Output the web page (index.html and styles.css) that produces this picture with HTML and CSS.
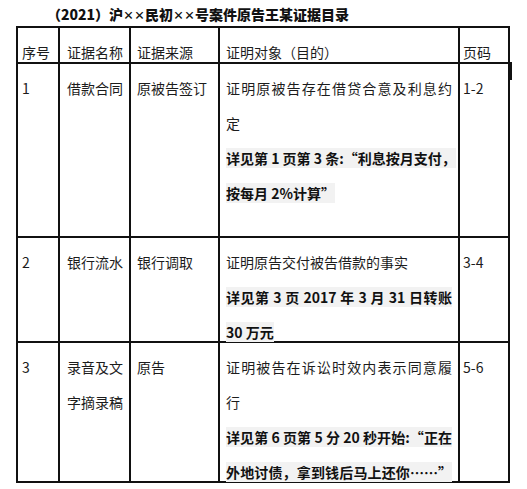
FILE: index.html
```html
<!DOCTYPE html>
<html lang="zh-CN">
<head>
<meta charset="utf-8">
<title>证据目录</title>
<link rel="stylesheet" href="styles.css">
</head>
<body>
<div class="title">（2021）沪<span class="x">××</span>民初<span class="x">××</span>号案件原告王某证据目录</div>
<div class="table">
  <div class="cell c1">序号</div>
  <div class="cell c2">证据名称</div>
  <div class="cell c3">证据来源</div>
  <div class="cell c4">证明对象（目的）</div>
  <div class="cell c5">页码</div>

  <div class="cell c1">1</div>
  <div class="cell c2">借款合同</div>
  <div class="cell c3">原被告签订</div>
  <div class="cell c4">
    <div class="ln fill">证明原被告存在借贷合意及利息约</div>
    <div class="ln">定</div>
    <div class="ln b fill"><span class="hl">详见第 1 页第 3 条:“利息按月支付，</span></div>
    <div class="ln b"><span class="hl">按每月 2%计算”</span></div>
  </div>
  <div class="cell c5 mark">1-2</div>

  <div class="cell c1">2</div>
  <div class="cell c2">银行流水</div>
  <div class="cell c3">银行调取</div>
  <div class="cell c4">
    <div class="ln">证明原告交付被告借款的事实</div>
    <div class="ln b fill"><span class="hl">详见第 3 页 2017 年 3 月 31 日转账</span></div>
    <div class="ln b"><span class="hl">30 万元</span></div>
  </div>
  <div class="cell c5">3-4</div>

  <div class="cell c1">3</div>
  <div class="cell c2">录音及文字摘录稿</div>
  <div class="cell c3">原告</div>
  <div class="cell c4">
    <div class="ln fill">证明被告在诉讼时效内表示同意履</div>
    <div class="ln">行</div>
    <div class="ln b fill"><span class="hl">详见第 6 页第 5 分 20 秒开始:“正在</span></div>
    <div class="ln b fill"><span class="hl">外地讨债，拿到钱后马上还你……”</span></div>
  </div>
  <div class="cell c5">5-6</div>
</div>
</body>
</html>
```

FILE: styles.css
```css
* {
  box-sizing: border-box;
}

html, body {
  margin: 0;
  padding: 0;
  background: #ffffff;
}

body {
  width: 527px;
  height: 489px;
  overflow: hidden;
  font-family: "Noto Sans CJK SC", "Noto Sans", sans-serif;
  color: #1c1c1c;
}

.title {
  height: 26px;
  padding-left: 47px;
  font-size: 14px;
  font-weight: 900;
  line-height: 28px;
  color: #111;
  white-space: nowrap;
}

.x {
  font-size: 11px;
}

.table {
  margin-left: 16px;
  width: 494px;
  display: grid;
  grid-template-columns: 42px 71px 89px 240px 50px;
  grid-template-rows: 36px 174px 105px 140px;
  border-left: 2px solid #111;
  border-top: 2px solid #111;
}

.cell {
  border-right: 2px solid #111;
  border-bottom: 2px solid #111;
  padding-top: 7px;
  font-size: 14px;
  line-height: 35px;
  min-width: 0;
}

.c1 { padding-left: 4px; }
.c2 { padding-left: 7px; padding-right: 2px; }
.c3 { padding-left: 6px; }
.c4 { padding-left: 6px; padding-right: 6px; }
.c5 { padding-left: 3px; }

.ln {
  white-space: nowrap;
}

.fill {
  text-align: justify;
  text-align-last: justify;
}

.b {
  font-weight: bold;
  color: #111;
}

.hl {
  background: #f2f2f2;
}

.mark {
  position: relative;
}

.mark::after {
  content: "";
  position: absolute;
  top: -2px;
  right: -4px;
  width: 3px;
  height: 18px;
  background: #111;
}
```
